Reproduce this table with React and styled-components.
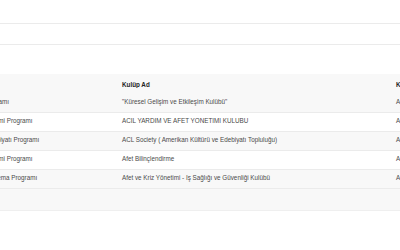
import React from 'react'
import styled, { createGlobalStyle } from 'styled-components'

const GlobalStyle = createGlobalStyle`
  body {
    margin: 0;
    background: #fff;
    font-family: "Liberation Sans", Arial, sans-serif;
    overflow: hidden;
  }
`

const Page = styled.div`
  width: 400px;
  padding-top: 23px;
`

const Toolbar = styled.div`
  height: 20px;
  border-top: 1px solid #ebebeb;
  border-bottom: 1px solid #ebebeb;
  margin-bottom: 29px;
`

// grey panel, table scrolled sideways so only part of it shows
const Panel = styled.div`
  background: #f8f8f8;
  padding-bottom: 21px;
  border-bottom: 1px solid #efefef;
  overflow: hidden;
`

const Grid = styled.div`
  width: 669px;
  margin-left: -78px;
`

const Row = styled.div`
  display: grid;
  grid-template-columns: 195px 274px 200px;
  align-items: center;
  box-sizing: border-box;
  height: ${p => (p.$head ? '19.5px' : '19px')};
  padding-top: ${p => (p.$head ? '2px' : '0')};
  background: ${p => (p.$even ? '#ffffff' : 'transparent')};
  border-bottom: ${p => (p.$head ? 'none' : '1px solid #ebebeb')};
`

const Cell = styled.div`
  padding: 0 5px;
  font-size: 6.3px;
  line-height: 1;
  white-space: nowrap;
  overflow: hidden;
  color: ${p => (p.$head ? '#222' : '#4a4a4a')};
  font-weight: ${p => (p.$head ? 700 : 400)};
`

const rows = [
  ['Uluslararası Ticaret Programı', '"Küresel Gelişim ve Etkileşim Kulübü"', 'Akademik'],
  ['Afet ve Acil Durum Yönetimi Programı', 'ACİL YARDIM VE AFET YÖNETİMİ KULÜBÜ', 'Akademik'],
  ['Amerikan Kültürü ve Edebiyatı Programı', 'ACL Society ( Amerikan Kültürü ve Edebiyatı Topluluğu)', 'Akademik'],
  ['Acil Durum ve Afet Yönetimi Programı', 'Afet Bilinçlendirme', 'Akademik'],
  ['Radyo, Televizyon ve Sinema Programı', 'Afet ve Kriz Yönetimi - İş Sağlığı ve Güvenliği Kulübü', 'Akademik'],
]

export default function App() {
  return (
    <>
      <GlobalStyle />
      <Page>
        <Toolbar />
        <Panel>
          <Grid>
            <Row $head>
              <Cell $head>Program Adı</Cell>
              <Cell $head>Kulüp Ad</Cell>
              <Cell $head>Kategori</Cell>
            </Row>
            {rows.map((r, i) => (
              <Row key={i} $even={i % 2 === 1}>
                {r.map((c, j) => (
                  <Cell key={j}>{c}</Cell>
                ))}
              </Row>
            ))}
          </Grid>
        </Panel>
      </Page>
    </>
  )
}
